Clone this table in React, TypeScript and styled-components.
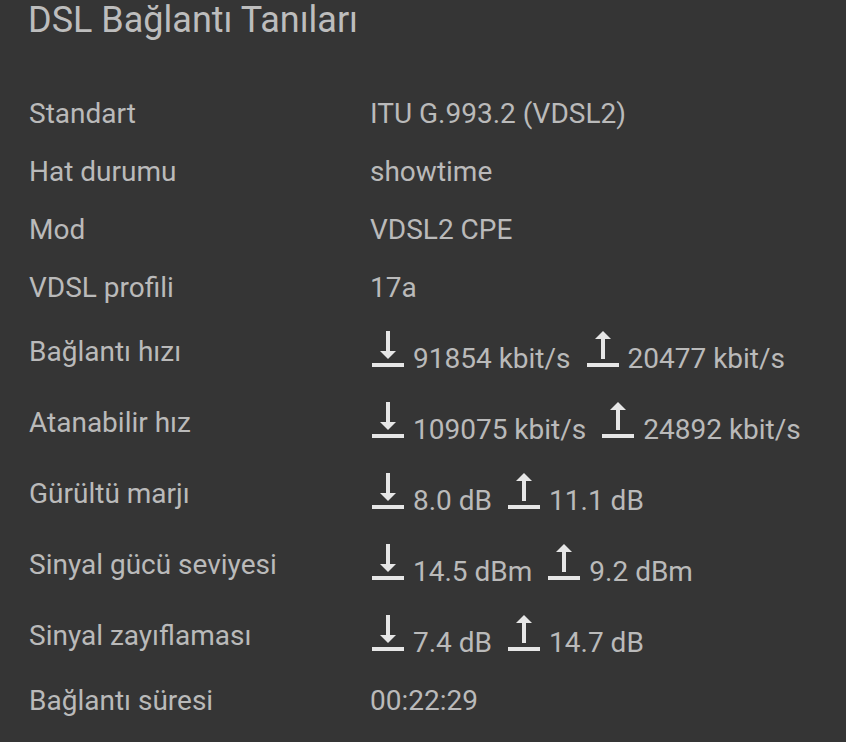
import React from "react";
import styled, { createGlobalStyle } from "styled-components";

const GlobalStyle = createGlobalStyle`
  html, body {
    margin: 0;
    padding: 0;
    background-color: #353535;
  }
  body {
    font-family: Roboto, "Liberation Sans", sans-serif;
    color: #bababa;
  }
`;

const Page = styled.div`
  width: 846px;
  height: 742px;
  overflow: hidden;
  background-color: #353535;
  padding: 0 0 0 29px;
  box-sizing: border-box;
`;

const Title = styled.h1`
  margin: 0 0 0 -1px;
  font-size: 36px;
  font-weight: 400;
  line-height: 40px;
  color: #bdbdbd;
`;

const Table = styled.div`
  display: grid;
  grid-template-columns: 341px 1fr;
  margin-top: 45px;
`;

const Label = styled.div<{ $icons?: boolean }>`
  display: flex;
  align-items: center;
  font-size: 28px;
  line-height: 28px;
  padding: ${(p) => (p.$icons ? "21px 0 22px" : "15px 0")};
`;

const Value = styled.div<{ $icons?: boolean }>`
  display: flex;
  align-items: ${(p) => (p.$icons ? "flex-end" : "center")};
  font-size: 28px;
  line-height: 28px;
  padding: ${(p) => (p.$icons ? "8px 0 15px" : "15px 0")};
`;

const Reading = styled.span`
  display: inline-flex;
  align-items: flex-end;
  margin-right: 14px;
`;

const Icon = styled.svg`
  width: 48px;
  height: 48px;
  flex: none;
  fill: #e6e6e6;
  margin-left: -6px;
  margin-right: 1px;
`;

const Down = () => (
  <Icon viewBox="0 0 24 24">
    <path d="M16 13h-3V3h-2v10H8l4 4 4-4zM4 19v2h16v-2H4z" />
  </Icon>
);

const Up = () => (
  <Icon viewBox="0 0 24 24">
    <path d="M8 7h3v10h2V7h3l-4-4-4 4zM4 19v2h16v-2H4z" />
  </Icon>
);

type Row = { label: string; value?: string; down?: string; up?: string };

const rows: Row[] = [
  { label: "Standart", value: "ITU G.993.2 (VDSL2)" },
  { label: "Hat durumu", value: "showtime" },
  { label: "Mod", value: "VDSL2 CPE" },
  { label: "VDSL profili", value: "17a" },
  { label: "Bağlantı hızı", down: "91854 kbit/s", up: "20477 kbit/s" },
  { label: "Atanabilir hız", down: "109075 kbit/s", up: "24892 kbit/s" },
  { label: "Gürültü marjı", down: "8.0 dB", up: "11.1 dB" },
  { label: "Sinyal gücü seviyesi", down: "14.5 dBm", up: "9.2 dBm" },
  { label: "Sinyal zayıflaması", down: "7.4 dB", up: "14.7 dB" },
  { label: "Bağlantı süresi", value: "00:22:29" },
];

export default function App() {
  return (
    <Page>
      <GlobalStyle />
      <Title>DSL Bağlantı Tanıları</Title>
      <Table>
        {rows.map((r) => {
          const icons = !!r.down;
          return (
            <React.Fragment key={r.label}>
              <Label $icons={icons}>{r.label}</Label>
              <Value $icons={icons}>
                {icons ? (
                  <>
                    <Reading>
                      <Down />
                      {r.down}
                    </Reading>
                    <Reading>
                      <Up />
                      {r.up}
                    </Reading>
                  </>
                ) : (
                  r.value
                )}
              </Value>
            </React.Fragment>
          );
        })}
      </Table>
    </Page>
  );
}
